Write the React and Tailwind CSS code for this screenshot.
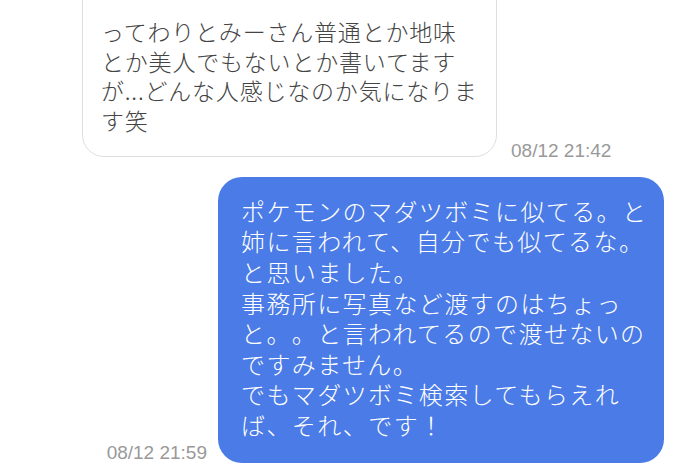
import React from 'react';

const jp = { fontFamily: '"Noto Sans CJK JP", "Noto Sans", sans-serif' };

const theirLines = [
    'ってわりとみーさん普通とか地味',
    'とか美人でもないとか書いてます',
    'が...どんな人感じなのか気になりま',
    'す笑',
];

const myLines = [
    'ポケモンのマダツボミに似てる。と',
    '姉に言われて、自分でも似てるな。',
    'と思いました。',
    '事務所に写真など渡すのはちょっ',
    'と。。と言われてるので渡せないの',
    'ですみません。',
    'でもマダツボミ検索してもらえれ',
    'ば、それ、です！',
];

const Time = ({ children, className = '' }) => (
    <span className={`text-[19px] leading-none text-[#999] whitespace-nowrap ${className}`} style={{ fontFamily: '"Liberation Sans", Arial, sans-serif' }}>
        {children}
    </span>
);

export default function App() {
    return (
        <div className="w-[680px] h-[472px] overflow-hidden bg-white flex flex-col [text-spacing-trim:space-all]">
            <div className="flex items-end pl-[82px] -mt-[30px]">
                <div className="w-[415px] rounded-[22px] border border-[#dedede] bg-white pt-[46px] pb-[20px] pl-[18px] text-[23px] font-light leading-[29.7px] tracking-[0.8px] text-[#444]" style={jp}>
                    {theirLines.map((l) => (
                        <div key={l} className="whitespace-nowrap">{l}</div>
                    ))}
                </div>
                <Time className="ml-[14px] mb-[-3px]">08/12 21:42</Time>
            </div>

            <div className="flex items-end justify-end pr-[16px] mt-[20px]">
                <Time className="mr-[11px] mb-[1px]">08/12 21:59</Time>
                <div className="w-[446px] rounded-[24px] bg-[#4a7be6] pt-[19px] pb-[22px] pl-[23px] text-[24px] font-light leading-[30.6px] tracking-[1.4px] text-white" style={jp}>
                    {myLines.map((l) => (
                        <div key={l} className="whitespace-nowrap">{l}</div>
                    ))}
                </div>
            </div>
        </div>
    );
}
